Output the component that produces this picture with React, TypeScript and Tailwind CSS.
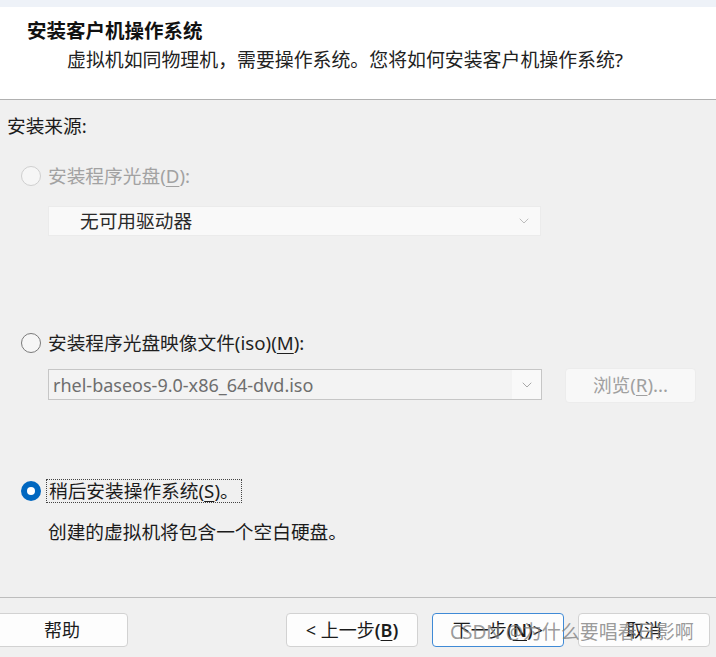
import { ChevronDown } from "lucide-react";

const font = "font-['Noto_Sans','Noto_Sans_CJK_SC',sans-serif]";

type RadioState = "disabled" | "off" | "on";

const Radio = ({ state }: { state: RadioState }) => {
  if (state === "on") {
    return (
      <span className="flex h-[20px] w-[20px] shrink-0 items-center justify-center rounded-full bg-[#0067c0]">
        <span className="h-[8px] w-[8px] rounded-full bg-white" />
      </span>
    );
  }
  return (
    <span
      className={`h-[20px] w-[20px] shrink-0 rounded-full border ${
        state === "disabled" ? "border-[#cfcfcf] bg-[#f6f6f6]" : "border-[#7a7a7a] bg-[#f6f6f6]"
      }`}
    />
  );
};

const Key = ({ k, bold }: { k: string; bold?: boolean }) => (
  <span className={bold ? "font-semibold" : ""}>
    (<span className="underline decoration-1 underline-offset-[3px]">{k}</span>)
  </span>
);

const Button = ({ children, primary, className = "" }: { children: React.ReactNode; primary?: boolean; className?: string }) => (
  <button
    className={`flex h-[34px] w-[132px] items-center justify-center rounded-[4px] bg-[#fdfdfd] text-[18px] leading-none text-[#1b1b1b] ${
      primary ? "border border-[#3f8ad6]" : "border border-[#d2d2d2]"
    } ${className}`}
  >
    {children}
  </button>
);

export default function App() {
  return (
    <div className={`relative flex h-[657px] w-[716px] flex-col overflow-hidden bg-[#f0f0f0] ${font}`}>
      {/* top strip */}
      <div className="h-[7px] bg-[#eef2f8]" />

      {/* header */}
      <div className="h-[93px] border-b border-[#b0b0b0] bg-white">
        <div className="mt-[12px] pl-[27px] text-[19.5px] font-bold leading-[24px] text-[#111]">
          安装客户机操作系统
        </div>
        <div className="mt-[5px] pl-[67px] text-[18.9px] leading-[24px] text-[#222]">
          虚拟机如同物理机，需要操作系统。您将如何安装客户机操作系统?
        </div>
      </div>

      {/* body */}
      <div className="flex flex-1 flex-col">
        <div className="mt-[14px] pl-[7px] text-[18.7px] leading-[24px] text-[#1b1b1b]">安装来源:</div>

        {/* installer disc */}
        <div className="mt-[26px] flex items-center pl-[21px]">
          <Radio state="disabled" />
          <span className="ml-[7px] text-[18.7px] leading-[24px] text-[#a2a2a2]">
            安装程序光盘<Key k="D" />:
          </span>
        </div>
        <div className="ml-[48px] mt-[18px] flex h-[30px] w-[493px] items-center border border-[#ebebeb] bg-[#f9f9f9] pl-[31px] pr-[8px]">
          <span className="flex-1 text-[18.7px] leading-none text-[#2a2a2a]">无可用驱动器</span>
          <ChevronDown className="h-[16px] w-[16px] text-[#bdbdbd]" strokeWidth={1.5} />
        </div>

        {/* iso image */}
        <div className="mt-[95px] flex items-center pl-[21px]">
          <Radio state="off" />
          <span className="ml-[7px] text-[18.7px] leading-[24px] text-[#1f1f1f]">
            安装程序光盘映像文件(iso)<Key k="M" />:
          </span>
        </div>
        <div className="mt-[13px] flex items-start pl-[48px]">
          <div className="mt-[1px] flex h-[31px] w-[494px] border border-[#c6c6c6] bg-[#f1f1f1]">
            <div className="flex flex-1 items-center bg-[#f3f3f3] pl-[4px] text-[18px] leading-none text-[#6e6e6e]">
              rhel-baseos-9.0-x86_64-dvd.iso
            </div>
            <div className="flex w-[29px] items-center justify-center bg-[#f9f9f9]">
              <ChevronDown className="h-[16px] w-[16px] text-[#a8a8a8]" strokeWidth={1.5} />
            </div>
          </div>
          <button className="ml-[23px] flex h-[35px] w-[131px] items-center justify-center rounded-[4px] border border-[#ececec] bg-[#f8f8f8] text-[18.7px] leading-none text-[#a0a0a0]">
            浏览<Key k="R" />...
          </button>
        </div>

        {/* install later */}
        <div className="mt-[76px] flex items-center pl-[21px]">
          <Radio state="on" />
          <span className="ml-[5px] border border-dotted border-[#444] px-[2px] text-[18.7px] leading-[22px] text-[#1b1b1b]">
            稍后安装操作系统<Key k="S" />。
          </span>
        </div>
        <div className="mt-[17px] pl-[48px] text-[18.7px] leading-[24px] text-[#1b1b1b]">
          创建的虚拟机将包含一个空白硬盘。
        </div>
      </div>

      {/* footer */}
      <div className="flex h-[60px] items-start justify-between border-t border-[#bdbdbd] pt-[15px] pr-[6px]">
        <Button className="-ml-[4px]">帮助</Button>
        <div className="flex gap-[14px]">
          <Button>
            &lt; 上一步<Key k="B" bold />
          </Button>
          <Button primary>
            下一步<Key k="N" bold /> &gt;
          </Button>
          <Button>取消</Button>
        </div>
      </div>

      {/* watermark */}
      <div className="pointer-events-none absolute left-[450px] top-[620px] text-[19px] leading-[24px] text-[#808080]/80">
        CSDN @为什么要唱春日影啊
      </div>
    </div>
  );
}
